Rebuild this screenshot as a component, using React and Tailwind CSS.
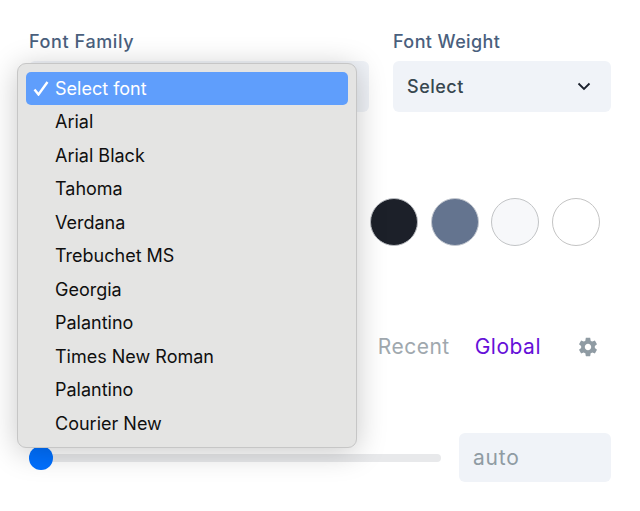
import React from "react";

const fonts = ["Arial", "Arial Black", "Tahoma", "Verdana", "Trebuchet MS", "Georgia", "Palantino", "Times New Roman", "Palantino", "Courier New"];

const swatches = [
  "bg-[#1c2029] border-[#b9bcc1]",
  "bg-[#64748f] border-[#c3c8d0]",
  "bg-[#f7f8fa] border-[#c2c4c6]",
  "bg-white border-[#c4c4c4]",
];

function FontMenu() {
  return (
    <div className="absolute left-[17px] top-[63px] z-10 w-[340px] h-[385px] rounded-[9px] border border-[#c6c6c6] bg-[#e4e4e3] px-[8px] pt-[8px] shadow-[0_4px_30px_rgba(0,0,0,0.22)] font-['Inter',sans-serif] text-[18px] text-[#0f0f0f]">
      <div className="flex h-[33px] items-center rounded-[5px] bg-[#5f9efc] text-white">
        <svg width="16" height="15" viewBox="0 0 16 15" className="ml-[7px] mr-[6px]">
          <path d="M1.5 8.5 L5.5 13.5 L14.5 1" fill="none" stroke="white" strokeWidth="2.4" />
        </svg>
        <span>Select font</span>
      </div>
      {fonts.map((f, i) => (
        <div key={i} className="flex h-[33.5px] items-center pl-[29px]">{f}</div>
      ))}
    </div>
  );
}

export default function App() {
  return (
    <div className="relative h-[511px] w-[640px] overflow-hidden bg-white px-[29px] pt-[31px] font-['Inter',sans-serif]">
      <FontMenu />

      <div className="flex gap-[24px]">
        <div className="w-[340px]">
          <div className="h-[20px] text-[18px] leading-[22px] font-medium tracking-[0.6px] text-[#4a5f7d]">Font Family</div>
          <div className="mt-[10px] h-[51px] rounded-[6px] bg-[#f0f3f8]" />
        </div>
        <div className="w-[218px]">
          <div className="h-[20px] text-[18px] leading-[22px] font-medium tracking-[0.4px] text-[#4a5f7d]">Font Weight</div>
          <div className="mt-[10px] flex h-[51px] items-center justify-between rounded-[6px] bg-[#f0f3f8] pl-[14px] pr-[20px]">
            <span className="text-[18px] font-medium tracking-[0.5px] text-[#37474f]">Select</span>
            <svg width="14" height="9" viewBox="0 0 14 9">
              <path d="M1.5 1.5 L7 7 L12.5 1.5" fill="none" stroke="#1a202c" strokeWidth="1.8" />
            </svg>
          </div>
        </div>
      </div>

      <div className="mt-[86px] flex justify-end gap-[12.67px] pr-[11px]">
        <div className="h-[48px] w-[48px] rounded-full border-[1.5px] border-[#c4c6ca] bg-[#e2e8f0]" />
        {swatches.map((s) => (
          <div key={s} className={`h-[48px] w-[48px] rounded-full border-[1.5px] ${s}`} />
        ))}
      </div>

      <div className="mt-[88px] flex h-[26px] items-center justify-end pr-[12px] text-[21px] leading-[26px] tracking-[0.5px]">
        <span className="text-[#a0a8ae]">Recent</span>
        <span className="ml-[25px] text-[#6610d8]">Global</span>
        <svg width="22" height="22" viewBox="0 0 24 24" className="ml-[36px]">
          <path
            fill="#8f9ba3"
            d="M19.43 12.98c.04-.32.07-.64.07-.98s-.03-.66-.07-.98l2.11-1.65c.19-.15.24-.42.12-.64l-2-3.46c-.12-.22-.39-.3-.61-.22l-2.49 1c-.52-.4-1.08-.73-1.69-.98l-.38-2.65C14.46 2.18 14.25 2 14 2h-4c-.25 0-.46.18-.49.42l-.38 2.65c-.61.25-1.17.59-1.69.98l-2.49-1c-.23-.09-.49 0-.61.22l-2 3.46c-.13.22-.07.49.12.64l2.11 1.65c-.04.32-.07.65-.07.98s.03.66.07.98l-2.11 1.65c-.19.15-.24.42-.12.64l2 3.46c.12.22.39.3.61.22l2.49-1c.52.4 1.08.73 1.69.98l.38 2.65c.03.24.24.42.49.42h4c.25 0 .46-.18.49-.42l.38-2.65c.61-.25 1.17-.59 1.69-.98l2.49 1c.23.09.49 0 .61-.22l2-3.46c.12-.22.07-.49-.12-.64l-2.11-1.65zM12 15.5c-1.93 0-3.5-1.57-3.5-3.5s1.57-3.5 3.5-3.5 3.5 1.57 3.5 3.5-1.57 3.5-3.5 3.5z"
          />
        </svg>
      </div>

      <div className="mt-[73px] flex items-center gap-[18px]">
        <div className="relative h-[8px] w-[412px] rounded-full bg-[#e8e9eb]">
          <div className="absolute left-0 top-[-8px] h-[24px] w-[24px] rounded-full bg-[#0070ff]" />
        </div>
        <div className="flex h-[49px] w-[152px] items-center rounded-[6px] bg-[#f0f3f8] pl-[14px] pt-[1px] text-[21px] tracking-[0.8px] text-[#8f9ba3]">auto</div>
      </div>
    </div>
  );
}
